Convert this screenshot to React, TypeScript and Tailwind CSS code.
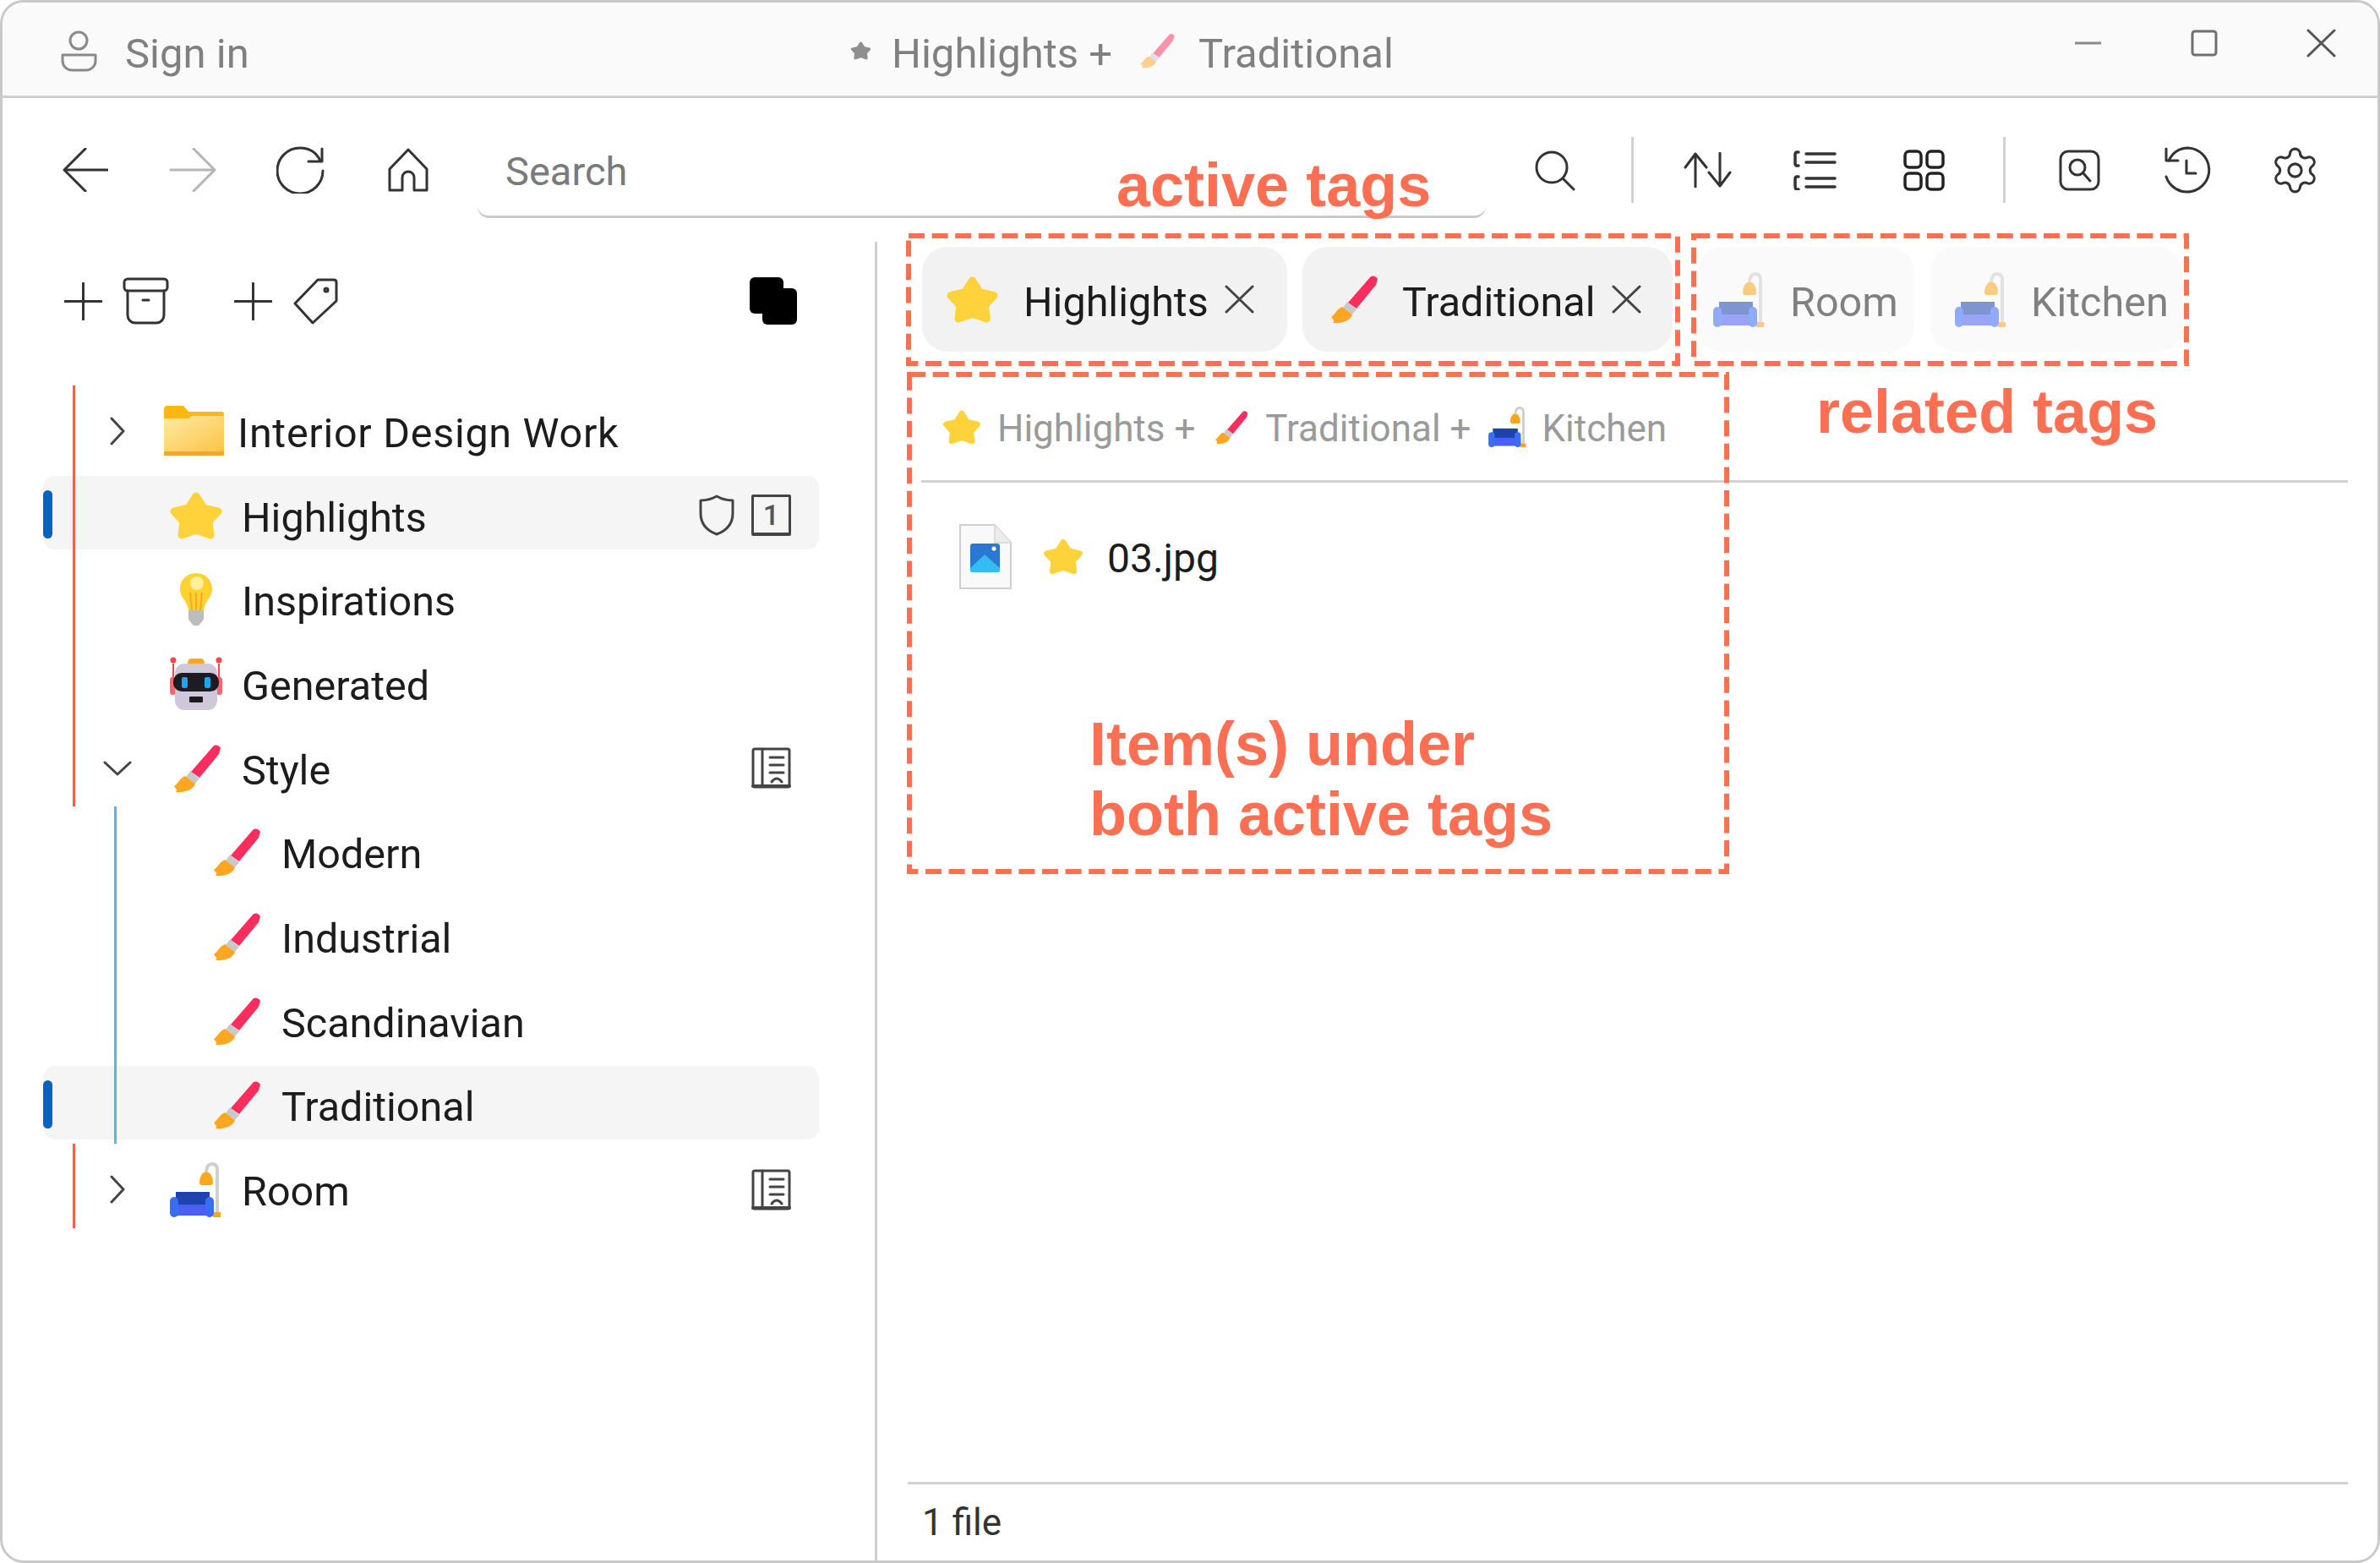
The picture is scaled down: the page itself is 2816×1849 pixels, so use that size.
import { Settings } from "lucide-react";
import type { ReactNode } from "react";

function Star({ className = "h-[58px] w-[64px]", fill = "#fdd23a" }: { className?: string; fill?: string }) {
  return (
    <svg viewBox="0 0 64 58" className={className}>
      <path
        d="M32 6 L41 20 L58 24 L47 36 L49 52 L32 46 L15 52 L17 36 L6 24 L23 20 Z"
        fill={fill}
        stroke={fill}
        strokeWidth="9"
        strokeLinejoin="round"
      />
    </svg>
  );
}

function Brush({ className = "h-[58px] w-[59px]" }: { className?: string }) {
  return (
    <svg viewBox="0 0 59 58" className={className}>
      <path d="M50 2 Q55 0 58 5 L56 12 L33 40 L23 33 Z" fill="#fb2d5d" />
      <path d="M22 32 L33 41 L28 47 L17 39 Z" fill="#c9c9c9" />
      <path d="M16 38 L28 47 C26 54 16 58 5 57 C8 54 4 52 3 50 C8 47 9 41 16 38 Z" fill="#fca622" />
    </svg>
  );
}

function Sofa({ className = "h-[65px] w-[62px]" }: { className?: string }) {
  return (
    <svg viewBox="0 0 62 65" className={className}>
      <path d="M56 60 V9 Q56 2 50 2 Q44 2 43 11" fill="none" stroke="#cfcfcf" strokeWidth="4" />
      <path d="M35 24 Q35 13 43 11 Q51 13 51 24 Q51 27 48 27 H38 Q35 27 35 24 Z" fill="#fba81f" />
      <path d="M51 59 H60 V65 H51 Z" fill="#fca622" />
      <rect x="7" y="35" width="40" height="16" fill="#1c44ad" />
      <path d="M8 50 H46 V63 H8 Z" fill="#4a5ff5" />
      <rect x="0" y="41" width="10" height="24" rx="5" fill="#3b6cf6" />
      <rect x="42" y="41" width="10" height="24" rx="5" fill="#3b6cf6" />
    </svg>
  );
}

function Folder() {
  return (
    <svg viewBox="0 0 72 59" className="mr-[6px] h-[59px] w-[72px]">
      <defs>
        <linearGradient id="fold" x1="0" y1="0" x2="1" y2="1">
          <stop offset="0" stopColor="#ffeaa5" />
          <stop offset="1" stopColor="#fcc445" />
        </linearGradient>
      </defs>
      <path d="M1 4 Q1 0 5 0 H24 L30 7 H69 Q72 7 72 10 V20 H1 Z" fill="#fcb80f" />
      <path d="M1 15 H30 L34 12 H72 V54 H1 Z" fill="url(#fold)" />
      <rect x="1" y="54" width="71" height="5" fill="#f2a92b" />
    </svg>
  );
}

function Bulb() {
  return (
    <svg viewBox="0 0 40 64" className="h-[64px] w-[40px]">
      <path d="M20 1 C32 1 39 10 39 20 C39 30 30 34 29 45 H11 C10 34 1 30 1 20 C1 10 8 1 20 1 Z" fill="#fdd12f" />
      <path d="M15 45 L13 24 M25 45 L27 24 M20 45 V24" stroke="#fba81f" strokeWidth="2" />
      <circle cx="21" cy="13" r="8" fill="#fff09a" />
      <path d="M11 45 H29 V56 L23 63 H17 L11 56 Z" fill="#bdbdbd" />
    </svg>
  );
}

function Robot() {
  return (
    <svg viewBox="0 0 64 63" className="h-[63px] w-[64px]">
      <path d="M22 9 Q22 2 26 2 H38 Q42 2 42 9 Z" fill="#fba81f" />
      <path d="M5 8 V26 M59 8 V26" stroke="#f8444f" strokeWidth="2" />
      <circle cx="5" cy="4" r="3.5" fill="#f8444f" />
      <circle cx="59" cy="4" r="3.5" fill="#f8444f" />
      <rect x="1" y="24" width="7" height="21" rx="3" fill="#f9676f" />
      <rect x="56" y="24" width="7" height="21" rx="3" fill="#f9676f" />
      <rect x="7" y="8" width="50" height="55" rx="11" fill="#cfc8da" />
      <rect x="5" y="19" width="54" height="22" rx="10" fill="#1c1c22" />
      <rect x="15" y="24" width="7" height="13" rx="2" fill="#19a6ea" />
      <rect x="42" y="24" width="7" height="13" rx="2" fill="#19a6ea" />
      <rect x="24" y="47" width="16" height="7" rx="1" fill="#1c1c22" />
    </svg>
  );
}

function Stroke({ w, h, children, color = "#333333", sw = 3 }: { w: number; h: number; children: ReactNode; color?: string; sw?: number }) {
  return (
    <svg
      viewBox={`0 0 ${w} ${h}`}
      width={w}
      height={h}
      fill="none"
      stroke={color}
      strokeWidth={sw}
      strokeLinecap="round"
      strokeLinejoin="round"
      className="shrink-0"
    >
      {children}
    </svg>
  );
}

const Chevron = ({ open }: { open?: boolean }) =>
  open ? (
    <Stroke w={34} h={18} color="#444444">
      <path d="M2 2 L17 16 L32 2" />
    </Stroke>
  ) : (
    <Stroke w={18} h={34} color="#444444">
      <path d="M2 2 L16 17 L2 32" />
    </Stroke>
  );

const BookIcon = () => (
  <Stroke w={47} h={49} color="#444444">
    <rect x="2" y="2" width="43" height="45" rx="2" />
    <path d="M2 46 H45" strokeWidth="4" />
    <path d="M13 2 V46 M22 12 H38 M22 21 H38 M22 30 H38" />
    <path d="M24 41 Q30 33 36 41" />
  </Stroke>
);

const CloseX = ({ color = "#444444" }: { color?: string }) => (
  <Stroke w={35} h={34} color={color}>
    <path d="M2 2 L33 32 M33 2 L2 32" />
  </Stroke>
);

type Row = {
  label: string;
  icon: ReactNode;
  depth: number;
  guide: "red" | "blue";
  chevron?: "open" | "closed";
  selected?: boolean;
  right?: ReactNode;
};

const rows: Row[] = [
  { label: "Interior Design Work", icon: <Folder />, depth: 0, guide: "red", chevron: "closed" },
  {
    label: "Highlights",
    icon: <Star />,
    depth: 0,
    guide: "red",
    selected: true,
    right: (
      <>
        <Stroke w={42} h={49} color="#444444">
          <path d="M21 2 C14 6 8 7 2 7 V22 C2 35 10 43 21 47 C32 43 40 35 40 22 V7 C34 7 28 6 21 2 Z" />
        </Stroke>
        <div className="ml-[20px] flex h-[49px] w-[47px] items-center justify-center rounded-[2px] border-[3px] border-b-[4px] border-[#444444] text-[34px] leading-none font-medium text-[#555555]">
          1
        </div>
      </>
    ),
  },
  { label: "Inspirations", icon: <Bulb />, depth: 0, guide: "red" },
  { label: "Generated", icon: <Robot />, depth: 0, guide: "red" },
  { label: "Style", icon: <Brush />, depth: 0, guide: "red", chevron: "open", right: <BookIcon /> },
  { label: "Modern", icon: <Brush />, depth: 1, guide: "blue" },
  { label: "Industrial", icon: <Brush />, depth: 1, guide: "blue" },
  { label: "Scandinavian", icon: <Brush />, depth: 1, guide: "blue" },
  { label: "Traditional", icon: <Brush />, depth: 1, guide: "blue", selected: true },
  { label: "Room", icon: <Sofa />, depth: 0, guide: "red", chevron: "closed", right: <BookIcon /> },
];

function TreeRow({ row }: { row: Row }) {
  return (
    <div className="relative flex h-[99.7px] items-center pr-[99px] pl-[97px] text-[48.5px] text-[#1c1c1c]">
      {row.selected && (
        <>
          <div className="absolute top-[7px] left-[48px] h-[87px] w-[918px] rounded-[14px] bg-[#f5f5f5]" />
          <div className="absolute top-[24px] left-[48px] h-[57px] w-[11px] rounded-full bg-[#0563c1]" />
        </>
      )}
      <div
        className={
          row.guide === "red"
            ? "absolute top-0 bottom-0 left-[83px] w-[3px] bg-[#f0624c]"
            : "absolute top-0 bottom-0 left-[132px] w-[3px] bg-[#4fb6ee]"
        }
      />
      <div className={row.depth === 1 ? "relative flex w-full items-center pt-[8px] pl-[47px]" : "relative flex w-full items-center pt-[8px]"}>
        <div className="flex w-[78px] justify-center">
          {row.chevron && <Chevron open={row.chevron === "open"} />}
        </div>
        <div className="flex w-[108px] shrink-0 justify-center">{row.icon}</div>
        <span className={row.icon && row.chevron === "closed" && row.label.length > 10 ? "-ml-[5px] pt-[7px] tracking-[0.7px]" : "pt-[7px]"}>
          {row.label}
        </span>
        {row.right && <div className="ml-auto flex items-center">{row.right}</div>}
      </div>
    </div>
  );
}

function Annotations() {
  return (
    <>
      <svg viewBox="0 0 2816 1849" className="pointer-events-none absolute inset-0 h-[1849px] w-[2816px]" fill="none" stroke="#fc6f53" strokeWidth="6" strokeDasharray="19 8.6">
        <rect x="1075" y="279" width="910" height="151" />
        <rect x="2004" y="279" width="583" height="151" />
        <rect x="1076" y="443" width="967" height="588" />
      </svg>
      <div className="absolute top-[183px] left-[1321px] font-['Liberation_Sans',Arial,sans-serif] text-[72px] leading-none font-bold text-[#fc6f53]">active tags</div>
      <div className="absolute top-[451px] left-[2149px] font-['Liberation_Sans',Arial,sans-serif] text-[72px] leading-none font-bold text-[#fc6f53]">related tags</div>
      <div className="absolute top-[839px] left-[1289px] font-['Liberation_Sans',Arial,sans-serif] text-[72px] leading-[83px] font-bold text-[#fc6f53]">
        Item(s) under
        <br />
        both active tags
      </div>
    </>
  );
}

export default function App() {
  return (
    <div className="relative h-[1849px] w-[2816px] overflow-hidden bg-white font-['Roboto',sans-serif]">
      <div className="flex h-full flex-col overflow-hidden rounded-[28px] border-[3px] border-[#c9c9c9]">
        {/* Title bar */}
        <div className="flex h-[113px] shrink-0 items-center border-b-[3px] border-[#cfcfcf] bg-[#fafafa] pr-[49px] pl-[69px] text-[49px] text-[#808080]">
          <div className="flex w-[934px] items-center pt-[4px]">
            <Stroke w={43} h={49} color="#8a8a8a">
              <circle cx="21" cy="12" r="10" />
              <path d="M2 29 H41 V36 A11 11 0 0 1 30 47 H13 A11 11 0 0 1 2 36 Z" />
            </Stroke>
            <span className="ml-[33px] pt-[7px]">Sign in</span>
          </div>
          <div className="flex items-center pt-[4px]">
            <Star className="h-[22px] w-[25px]" fill="#8f8f8f" />
            <span className="ml-[24px] pt-[7px]">Highlights +</span>
            <div className="ml-[30px] flex opacity-50">
              <Brush className="h-[42px] w-[46px]" />
            </div>
            <span className="ml-[26px] pt-[7px]">Traditional</span>
          </div>
          <div className="-mt-[15px] ml-auto flex items-center">
            <Stroke w={31} h={4} color="#8a8a8a">
              <path d="M1 2 H30" />
            </Stroke>
            <div className="ml-[106px]">
              <Stroke w={32} h={32} color="#707070">
                <rect x="2" y="2" width="28" height="28" rx="3" />
              </Stroke>
            </div>
            <div className="ml-[105px]">
              <CloseX color="#555555" />
            </div>
          </div>
        </div>

        {/* Toolbar */}
        <div className="flex h-[170px] shrink-0 items-center pl-[71px]">
          <Stroke w={54} h={52}>
            <path d="M27 1 L2 26 L27 51 M2 26 H53" />
          </Stroke>
          <div className="ml-[72px]">
            <Stroke w={56} h={52} color="#b5b5b5">
              <path d="M29 1 L54 26 L29 51 M54 26 H2" />
            </Stroke>
          </div>
          <div className="ml-[71px]">
            <Stroke w={58} h={56}>
              <path d="M52 17 C47 7 38 2 28 2 A27 27 0 1 0 55 29" />
              <path d="M54 3 V18 H38" />
            </Stroke>
          </div>
          <div className="ml-[73px]">
            <Stroke w={50} h={52}>
              <path d="M25 2 L3 25 V50 H18 V35 A7 7 0 0 1 32 35 V50 H47 V25 Z" />
            </Stroke>
          </div>
          <div className="mt-[6px] ml-[57px] flex h-[108px] w-[1193px] items-center rounded-b-[14px] border-b-[3px] border-[#c9c9c9] pt-[2px] pl-[33px] text-[47px] text-[#7a7a7a]">
            Search
          </div>
          <div className="ml-[57px]">
            <Stroke w={49} h={49}>
              <circle cx="21" cy="21" r="18" />
              <path d="M34 34 L47 47" />
            </Stroke>
          </div>
          <div className="ml-[66px] h-[78px] w-[3px] bg-[#d2d2d2]" />
          <div className="ml-[59px]">
            <Stroke w={57} h={42}>
              <path d="M14 41 V2 M2 18 L14 2 L27 18 M43 1 V40 M30 24 L43 40 L55 24" />
            </Stroke>
          </div>
          <div className="ml-[73px]">
            <Stroke w={51} h={47} sw={3.5}>
              <path d="M6 2 H4 Q2 2 2 5 V15 Q2 18 4 18 H6 M6 31 H4 Q2 31 2 34 V42 Q2 46 4 46 H6 M15 4 H49 M15 14 H49 M15 33 H49 M15 43 H49" />
            </Stroke>
          </div>
          <div className="ml-[79px]">
            <Stroke w={49} h={49} color="#222222" sw={3.5}>
              <rect x="2" y="2" width="19" height="19" rx="5" />
              <rect x="28" y="2" width="19" height="19" rx="5" />
              <rect x="2" y="28" width="19" height="19" rx="5" />
              <rect x="28" y="28" width="19" height="19" rx="5" />
            </Stroke>
          </div>
          <div className="ml-[69px] h-[78px] w-[3px] bg-[#d2d2d2]" />
          <div className="ml-[63px]">
            <Stroke w={49} h={49}>
              <rect x="2" y="2" width="45" height="45" rx="9" />
              <circle cx="22" cy="21" r="9" />
              <path d="M29 28 L37 37" />
            </Stroke>
          </div>
          <div className="ml-[75px]">
            <Stroke w={56} h={56}>
              <path d="M6 17 C11 7 19 2 29 2 A26 26 0 1 1 3 36" />
              <path d="M3 3 V17 H17" />
              <path d="M27 17 V32 H38" />
            </Stroke>
          </div>
          <div className="ml-[69px] flex text-[#333333]">
            <Settings size={61} strokeWidth={1.2} />
          </div>
        </div>

        {/* Main */}
        <div className="flex min-h-0 flex-1">
          <div className="w-[1032px] shrink-0">
            <div className="mb-[30px] flex h-[140px] items-center pl-[73px]">
              <Stroke w={45} h={45}>
                <path d="M22.5 1 V44 M1 22.5 H44" />
              </Stroke>
              <div className="ml-[24px]">
                <Stroke w={55} h={56}>
                  <rect x="2" y="2" width="51" height="14" rx="4" />
                  <path d="M6 16 V45 A9 9 0 0 0 15 54 H40 A9 9 0 0 0 49 45 V16 M24 27 H31" />
                </Stroke>
              </div>
              <div className="ml-[77px]">
                <Stroke w={45} h={45}>
                  <path d="M22.5 1 V44 M1 22.5 H44" />
                </Stroke>
              </div>
              <div className="ml-[25px]">
                <Stroke w={53} h={55}>
                  <path d="M29 2 H48 Q51 2 51 5 V27 L23 53 L2 30 Z" />
                  <circle cx="39" cy="14" r="2" />
                </Stroke>
              </div>
              <svg viewBox="0 0 56 56" className="ml-[487px] h-[56px] w-[56px]">
                <rect x="0" y="0" width="40" height="43" rx="6" fill="#000000" />
                <rect x="15" y="13" width="41" height="43" rx="6" fill="#000000" />
              </svg>
            </div>
            <div>
              {rows.map((row) => (
                <TreeRow key={row.label} row={row} />
              ))}
            </div>
          </div>

          {/* Content */}
          <div className="flex min-w-0 flex-1 flex-col border-l-[3px] border-[#cfcfcf]">
            <div className="flex pt-[6px] pl-[53px] text-[48.5px]">
              <div className="flex h-[124px] w-[432px] items-center rounded-[30px] bg-[#f2f2f2] pl-[28px] text-[#1c1c1c]">
                <Star className="h-[59px] w-[63px]" />
                <span className="ml-[29px] pt-[9px]">Highlights</span>
                <div className="ml-[19px] flex">
                  <CloseX />
                </div>
              </div>
              <div className="ml-[18px] flex h-[124px] w-[438px] items-center rounded-[30px] bg-[#f2f2f2] pl-[31px] text-[#1c1c1c]">
                <Brush />
                <span className="ml-[28px] pt-[9px]">Traditional</span>
                <div className="ml-[20px] flex">
                  <CloseX />
                </div>
              </div>
              <div className="ml-[29px] flex h-[124px] w-[257px] items-center rounded-[30px] bg-[#fafafa] pl-[19px] text-[#808080]">
                <div className="flex opacity-55">
                  <Sofa />
                </div>
                <span className="ml-[29px] pt-[9px]">Room</span>
              </div>
              <div className="ml-[19px] flex h-[124px] w-[299px] items-center rounded-[30px] bg-[#fafafa] pl-[29px] text-[#808080]">
                <div className="flex opacity-55">
                  <Sofa />
                </div>
                <span className="ml-[28px] pt-[9px]">Kitchen</span>
              </div>
            </div>

            <div className="mt-[26px] mr-[35px] ml-[52px] flex h-[129px] shrink-0 items-center border-b-[3px] border-[#d2d2d2] pl-[25px] text-[44px] text-[#9a9a9a]">
              <Star className="h-[43px] w-[46px]" />
              <span className="ml-[19px] pt-[3px]">Highlights +</span>
              <div className="ml-[22px] flex">
                <Brush className="h-[41px] w-[41px]" />
              </div>
              <span className="ml-[20px] pt-[3px]">Traditional +</span>
              <div className="ml-[20px] flex">
                <Sofa className="h-[48px] w-[46px]" />
              </div>
              <span className="ml-[18px] pt-[3px]">Kitchen</span>
            </div>

            <div className="mt-[48px] flex items-center pl-[97px]">
              <svg viewBox="0 0 62 77" className="h-[77px] w-[62px]">
                <path d="M1 1 H42 L61 22 V76 H1 Z" fill="#f9f9f9" stroke="#cfcfcf" strokeWidth="2" />
                <path d="M42 1 V22 H61" fill="#ececec" stroke="#dcdcdc" strokeWidth="2" />
                <rect x="13" y="23" width="35" height="34" rx="3" fill="#2b78d4" />
                <path d="M13 52 L30 36 L48 52 V54 Q48 57 45 57 H16 Q13 57 13 54 Z" fill="#35bdf2" />
                <circle cx="41" cy="29" r="2.5" fill="#ffffff" />
              </svg>
              <Star className="ml-[37px] h-[45px] w-[48px]" />
              <span className="ml-[28px] pt-[6px] text-[48px] text-[#1c1c1c]">03.jpg</span>
            </div>

            <div className="mt-auto mr-[35px] ml-[36px] flex h-[93px] shrink-0 items-center border-t-[3px] border-[#d2d2d2] pl-[17px] text-[44px] text-[#333333]">
              1 file
            </div>
          </div>
        </div>
      </div>
      <Annotations />
    </div>
  );
}
